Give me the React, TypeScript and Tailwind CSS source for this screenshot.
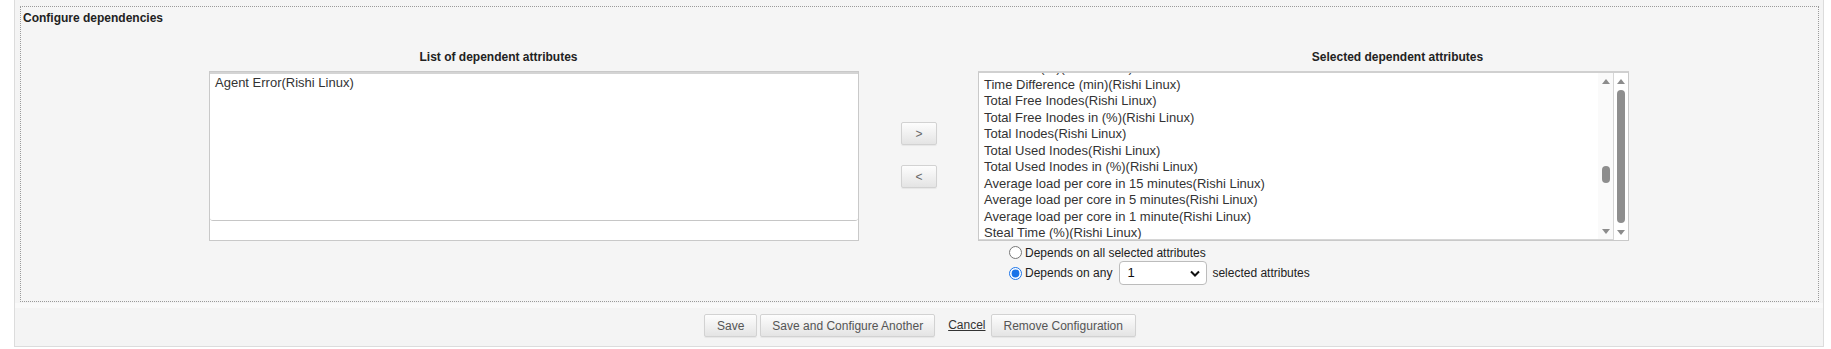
import React from "react";

const available = ["Agent Error(Rishi Linux)"];

const selected = [
    "Idle Time (%)(Rishi Linux)",
    "Time Difference (min)(Rishi Linux)",
    "Total Free Inodes(Rishi Linux)",
    "Total Free Inodes in (%)(Rishi Linux)",
    "Total Inodes(Rishi Linux)",
    "Total Used Inodes(Rishi Linux)",
    "Total Used Inodes in (%)(Rishi Linux)",
    "Average load per core in 15 minutes(Rishi Linux)",
    "Average load per core in 5 minutes(Rishi Linux)",
    "Average load per core in 1 minute(Rishi Linux)",
    "Steal Time (%)(Rishi Linux)",
];

function Arrow({ down }: { down?: boolean }) {
    return (
        <div className="h-[16px] flex items-center justify-center">
            <svg width="8" height="5" viewBox="0 0 8 5">
                <path d={down ? "M0 0h8L4 5z" : "M0 5h8L4 0z"} fill="#8c8c8c" />
            </svg>
        </div>
    );
}

function ScrollBar({ thumbClass }: { thumbClass: string }) {
    return (
        <div className="flex flex-col h-full">
            <Arrow />
            <div className="flex-1 flex flex-col items-center">
                <div className={`w-[8px] rounded-full bg-[#8e8e8e] ${thumbClass}`} />
            </div>
            <Arrow down />
        </div>
    );
}

function Btn({ label, className = "" }: { label: string; className?: string }) {
    return (
        <button
            className={`h-[23px] border border-[#d2d2d2] rounded-[2px] bg-gradient-to-b from-[#fdfdfd] to-[#e4e4e4] text-[12px] text-[#555] leading-none shadow-[0_1px_1px_rgba(0,0,0,0.06)] ${className}`}
        >
            {label}
        </button>
    );
}

export default function App() {
    return (
        <div className="w-[1831px] h-[349px] bg-white font-['Liberation_Sans',Arial,sans-serif] text-[#333]">
            <div className="ml-[14px] w-[1810px] h-[347px] border-x border-b border-[#dcdcdc] bg-[#f4f4f4] flex flex-col">
                {/* Configure dependencies */}
                <div className="pt-[6px] pl-[5px] pr-[4px]">
                    <div className="h-[296px] border border-dotted border-[#9a9a9a] bg-[#f5f5f5] flex flex-col">
                        <div className="pl-[2px] pt-[4px] h-[19px] text-[12px] font-bold leading-[14px] text-[#222]">
                            Configure dependencies
                        </div>

                        <div className="flex mt-[24px] h-[14px] text-[12px] font-bold leading-[14px] text-[#222]">
                            <div className="w-[117px]" />
                            <div className="w-[721px] text-center">List of dependent attributes</div>
                            <div className="w-[119px]" />
                            <div className="w-[839px] text-center">Selected dependent attributes</div>
                        </div>

                        <div className="flex mt-[7px]">
                            <div className="w-[188px]" />

                            {/* left list */}
                            <div className="w-[650px] h-[170px] border border-[#c9c9c9] bg-white">
                                <div className="h-[149px] border-t-2 border-[#d4d4d4] border-b border-b-[#c6c6c6] rounded-bl-[3px] rounded-br-[3px] pt-[1px] text-[13px]">
                                    {available.map((a) => (
                                        <div key={a} className="h-[16.5px] leading-[16.5px] pl-[5px]">
                                            {a}
                                        </div>
                                    ))}
                                </div>
                            </div>

                            {/* move buttons */}
                            <div className="w-[119px] flex flex-col items-start pl-[42px] pt-[51px] gap-[20px]">
                                <Btn label=">" className="w-[36px] h-[22px] text-[#666]" />
                                <Btn label="<" className="w-[36px] h-[22px] text-[#666]" />
                            </div>

                            {/* right list + options */}
                            <div className="w-[651px] flex flex-col">
                                <div className="h-[170px] border border-[#c9c9c9] border-t-2 border-t-[#d0d0d0] bg-white flex">
                                    <div className="flex-1 flex border-r border-b border-[#d6d6d6]">
                                        <div className="flex-1 overflow-hidden text-[13px]">
                                            <div className="-mt-[13px]">
                                                {selected.map((s) => (
                                                    <div key={s} className="h-[16.5px] leading-[16.5px] pl-[5px] whitespace-nowrap">
                                                        {s}
                                                    </div>
                                                ))}
                                            </div>
                                        </div>
                                        <div className="w-[15px] bg-[#fafafa]">
                                            <ScrollBar thumbClass="mt-[77px] h-[17px]" />
                                        </div>
                                    </div>
                                    <div className="w-[14px] bg-white">
                                        <ScrollBar thumbClass="mt-[1px] h-[133px]" />
                                    </div>
                                </div>

                                <div className="mt-[3px] pl-[31px] text-[12px] text-[#222]">
                                    <label className="h-[17px] flex items-center">
                                        <input type="radio" name="dep" className="m-0 mr-[3px] w-[13px] h-[13px]" />
                                        Depends on all selected attributes
                                    </label>
                                    <label className="h-[24px] flex items-center">
                                        <input
                                            type="radio"
                                            name="dep"
                                            defaultChecked
                                            className="m-0 mr-[3px] w-[13px] h-[13px] accent-[#1a73e8]"
                                        />
                                        Depends on any
                                        <div className="ml-[7px] mr-[5px] w-[88px] h-[24px] border border-[#bcbcbc] rounded-[4px] bg-white flex items-center justify-between pl-[7px] pr-[6px] text-[13px] text-[#111]">
                                            <span>1</span>
                                            <svg width="10" height="7" viewBox="0 0 10 7">
                                                <path d="M1 1.5l4 4 4-4" fill="none" stroke="#111" strokeWidth="2" />
                                            </svg>
                                        </div>
                                        selected attributes
                                    </label>
                                </div>
                            </div>
                        </div>
                    </div>
                </div>

                <div className="h-[5px] mt-[1px] bg-[#f9f9f9]" />

                {/* footer actions */}
                <div className="flex-1 flex items-start pt-[6px] pl-[689px]">
                    <Btn label="Save" className="px-[12px]" />
                    <Btn label="Save and Configure Another" className="ml-[3px] px-[11px]" />
                    <a className="ml-[13px] mt-[4px] text-[12px] leading-[14px] text-[#333] underline">Cancel</a>
                    <Btn label="Remove Configuration" className="ml-[5px] px-[12px]" />
                </div>
            </div>
        </div>
    );
}
